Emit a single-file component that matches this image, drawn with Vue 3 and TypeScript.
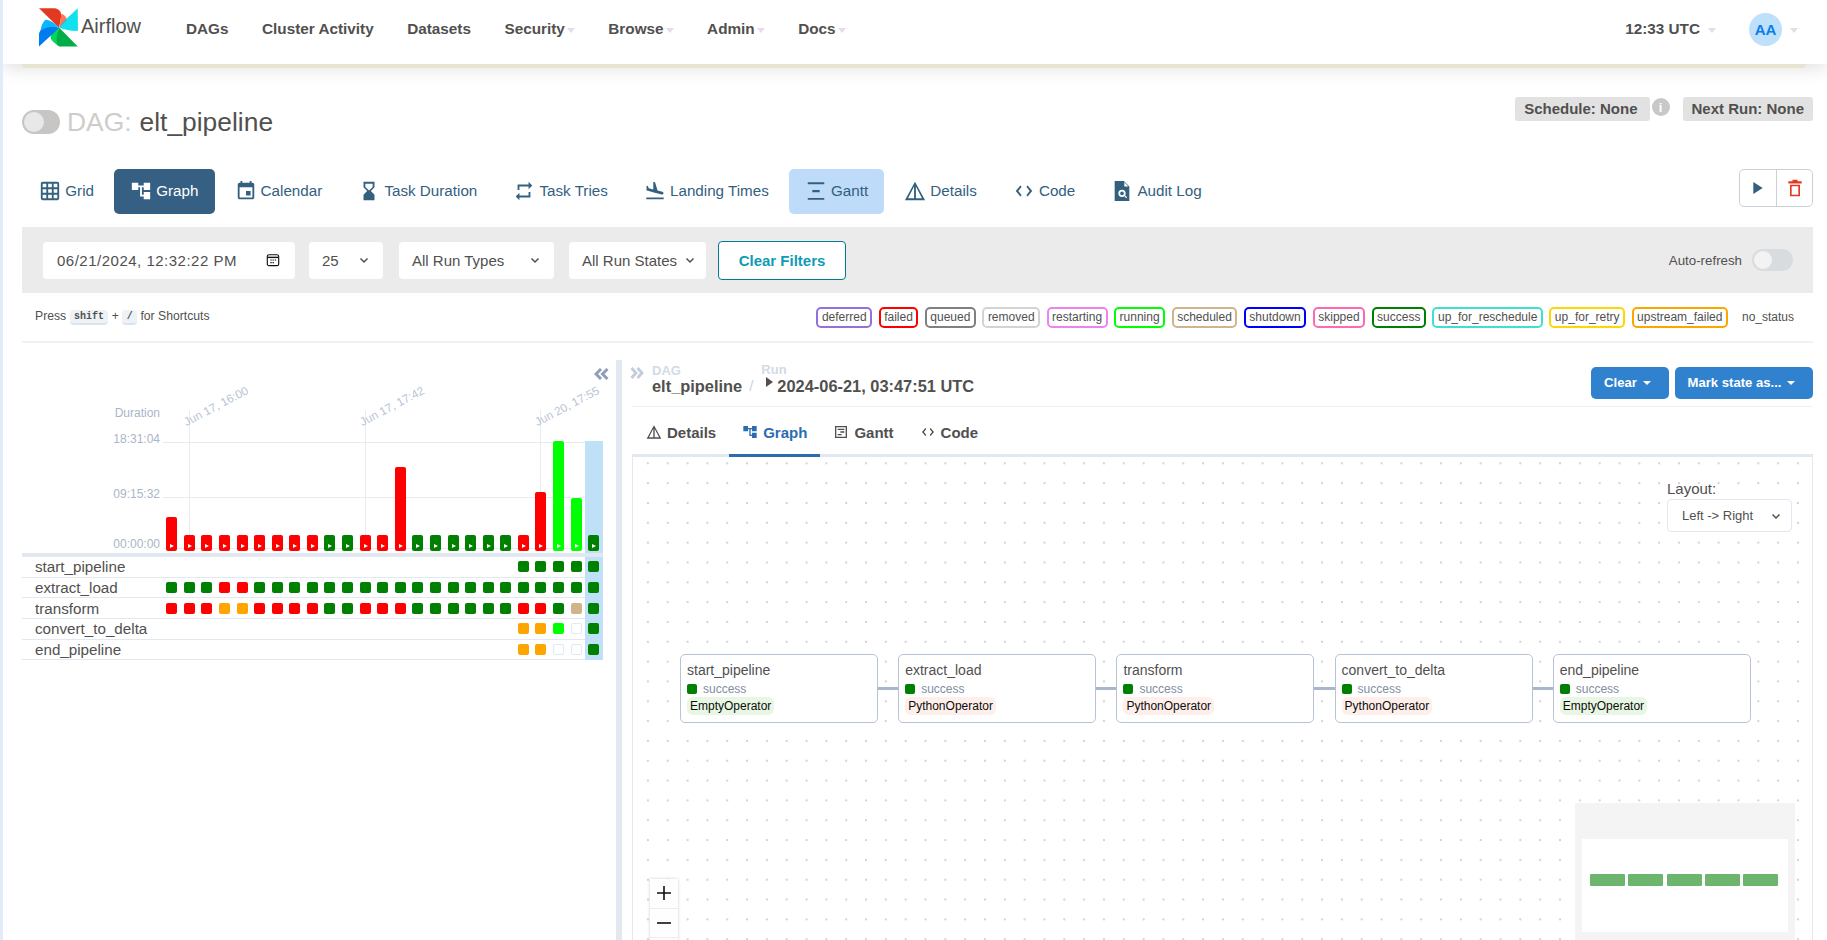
<script setup lang="ts">
interface IconTab { label: string; d: string; active?: boolean; hover?: boolean }

const paths = {
  grid: 'M20 2H4c-1.1 0-2 .9-2 2v16c0 1.1.9 2 2 2h16c1.1 0 2-.9 2-2V4c0-1.1-.9-2-2-2zM8 20H4v-4h4v4zm0-6H4v-4h4v4zm0-6H4V4h4v4zm6 12h-4v-4h4v4zm0-6h-4v-4h4v4zm0-6h-4V4h4v4zm6 12h-4v-4h4v4zm0-6h-4v-4h4v4zm0-6h-4V4h4v4z',
  graph: 'M22 11V3h-7v3H9V3H2v8h7V8h2v10h4v3h7v-8h-7v3h-2V8h2v3h7z',
  cal: 'M17 12h-5v5h5v-5zM16 1v2H8V1H6v2H5c-1.11 0-1.99.9-1.99 2L3 19c0 1.1.89 2 2 2h14c1.1 0 2-.9 2-2V5c0-1.1-.9-2-2-2h-1V1h-2zm3 18H5V8h14v11z',
  hour: 'M18 22l-.01-6L14 12l3.99-4.010L18 2H6v6l4 4-4 3.990V22h12zM8 7.500V4h8v3.500l-4 4-4-4z',
  tries: 'M7 7h10v3l4-4-4-4v3H5v6h2V7zm10 10H7v-3l-4 4 4 4v-3h12v-6h-2v4z',
  land: 'M2.500 19h19v2h-19zm7.180-5.730l4.350 1.160 5.310 1.420c.8.210 1.620-.260 1.840-1.060.210-.8-.260-1.620-1.060-1.840l-5.310-1.420-2.760-9.020L10.120 2v8.280L5.150 8.950l-.930-2.320-1.450-.390v5.170l1.600.430 5.310 1.430z',
  gantt: 'M3 2.500h18v2H3zM8 11h8v2.400H8zM3 19.500h18v2H3z',
  warn: 'M12 2L1 22h22L12 2zm-1 5.200V20H4.400L11 7.200zm2 0L19.600 20H13V7.200z',
  code: 'M9.400 16.600L5.800 12l3.600-4.600L8 6l-5 6 5 6 1.400-1.400zm5.200 0l3.600-4.600-3.600-4.600L16 6l5 6-5 6-1.400-1.400z',
  audit: 'M4 1h10l6 6v16H4zM14.500 2.500V7H19zM12 10.500a4 4 0 1 0 0 8 4 4 0 0 0 0-8zM12 12.500a2 2 0 1 1 0 4 2 2 0 0 1 0-4zM14.500 17.500l2 2.500 1-1-2-2.500z',
  ganttBox: 'M3 3h18v18H3zM5 5v14h14V5zM7 7h10v2H7zM11 11h6v2h-6zM7 15h6v2H7z'
}

const tabs: IconTab[] = [
  { label: 'Grid', d: paths.grid },
  { label: 'Graph', d: paths.graph, active: true },
  { label: 'Calendar', d: paths.cal },
  { label: 'Task Duration', d: paths.hour },
  { label: 'Task Tries', d: paths.tries },
  { label: 'Landing Times', d: paths.land },
  { label: 'Gantt', d: paths.gantt, hover: true },
  { label: 'Details', d: paths.warn },
  { label: 'Code', d: paths.code },
  { label: 'Audit Log', d: paths.audit }
]

const detailTabs: IconTab[] = [
  { label: 'Details', d: paths.warn },
  { label: 'Graph', d: paths.graph, active: true },
  { label: 'Gantt', d: paths.ganttBox },
  { label: 'Code', d: paths.code }
]

const navLinks = [
  { label: 'DAGs', caret: false },
  { label: 'Cluster Activity', caret: false },
  { label: 'Datasets', caret: false },
  { label: 'Security', caret: true },
  { label: 'Browse', caret: true },
  { label: 'Admin', caret: true },
  { label: 'Docs', caret: true }
]

const legend = [
  ['deferred', '#9370db'], ['failed', '#ff0000'], ['queued', '#808080'], ['removed', '#d3d3d3'],
  ['restarting', '#ee82ee'], ['running', '#00ff00'], ['scheduled', '#d2b48c'], ['shutdown', '#0000ff'],
  ['skipped', '#ff69b4'], ['success', '#008000'], ['up_for_reschedule', '#40e0d0'], ['up_for_retry', '#ffd700'],
  ['upstream_failed', '#ffa500']
]

const colors: Record<string, string> = { r: '#ff0000', g: '#008000', l: '#00ff00', o: '#ffa500', t: '#d2b48c' }

const barStates = 'rrrrrrrrrggrrrggggggrrllg'.split('')
const barHeights: Record<number, number> = { 0: 34, 13: 84, 21: 59, 22: 110, 23: 53 }
const bars = barStates.map((s, i) => ({ color: colors[s], height: (barHeights[i] ?? 16) + 'px' }))

const rows = [
  { name: 'start_pipeline', states: '....................ggggg' },
  { name: 'extract_load', states: 'gggrrgggggggggggggggggggg' },
  { name: 'transform', states: 'rrroorrrrggrrrggggggrrgtg' },
  { name: 'convert_to_delta', states: '....................oolng' },
  { name: 'end_pipeline', states: '....................oonng' }
].map((r) => ({ name: r.name, cells: r.states.split('') }))

const nodes = [
  { name: 'start_pipeline', op: 'EmptyOperator', tone: 'empty' },
  { name: 'extract_load', op: 'PythonOperator', tone: 'python' },
  { name: 'transform', op: 'PythonOperator', tone: 'python' },
  { name: 'convert_to_delta', op: 'PythonOperator', tone: 'python' },
  { name: 'end_pipeline', op: 'EmptyOperator', tone: 'empty' }
]

const xLabels = [
  { text: 'Jun 17, 16:00', cls: 'x1' },
  { text: 'Jun 17, 17:42', cls: 'x2' },
  { text: 'Jun 20, 17:55', cls: 'x3' }
]
</script>

<template>
  <div class="page">
    <header class="nav">
      <div class="brand">
        <svg class="logo" viewBox="57 25 117 116" width="39" height="39">
          <path d="M57 25L105 25C120 28 124 38 124 50L117 84Z" fill="#e43921" />
          <path d="M124 42C135 45 142 55 140 66L118 84Z" fill="#ff7557" />
          <path d="M173 25L174 93C160 95 135 90 118 84Z" fill="#11e1ee" />
          <path d="M173 25L118 84C122 70 150 48 173 25Z" fill="#00c7d4" />
          <path d="M173 140L118 140C104 135 102 118 108 105L118 84Z" fill="#00ad46" />
          <path d="M118 84C104 88 92 100 92 114C96 126 104 130 112 134C108 118 110 100 118 84Z" fill="#04d659" />
          <path d="M57 140L57 102C60 88 75 76 92 78L118 84Z" fill="#017cee" />
          <path d="M118 84C104 70 88 58 76 60C68 68 62 82 62 92C80 80 100 78 118 84Z" fill="#0cb6ff" />
        </svg>
        <span class="brand-name">Airflow</span>
      </div>
      <nav class="links">
        <a v-for="l in navLinks" :key="l.label" class="link">
          {{ l.label }}<i v-if="l.caret" class="caret"></i>
        </a>
      </nav>
      <div class="nav-right">
        <span class="link">12:33 UTC<i class="caret wide"></i></span>
        <span class="avatar">AA</span>
        <i class="caret wide"></i>
      </div>
    </header>
    <div class="accent"></div>

    <main class="main">
      <section class="title-row">
        <h1 class="title">
          <span class="toggle"><span class="knob"></span></span>
          <span class="dag-word">DAG:</span>
          <span class="dag-name">elt_pipeline</span>
        </h1>
        <div class="sched">
          <span class="pill schedule">Schedule: None</span>
          <span class="info">i</span>
          <span class="pill next">Next Run: None</span>
        </div>
      </section>

      <section class="tabs">
        <a
          v-for="t in tabs"
          :key="t.label"
          class="tab"
          :class="{ active: t.active, hover: t.hover }"
        >
          <svg viewBox="0 0 24 24" class="tab-ic"><path :d="t.d" fill="currentColor" fill-rule="evenodd" /></svg>
          {{ t.label }}
        </a>
        <div class="actions">
          <button class="act">
            <svg viewBox="0 0 24 24" width="16" height="16"><path d="M5 3l14 9-14 9z" fill="#33607f" /></svg>
          </button>
          <button class="act">
            <svg viewBox="0 0 24 24" width="20" height="20">
              <path d="M9 2h6v2h5v2.500H4V4h5zM6 8h12v14H6zM8 10v10h8V10z" fill="#e43921" fill-rule="evenodd" />
            </svg>
          </button>
        </div>
      </section>

      <section class="filters">
        <div class="field date">
          <span>06/21/2024, 12:32:22 PM</span>
          <svg viewBox="0 0 16 16" width="14" height="14">
            <rect x="1.500" y="2" width="13" height="12.500" rx="2" fill="none" stroke="#111" stroke-width="1.300" />
            <path d="M2 5h12" stroke="#111" stroke-width="1.600" />
            <path d="M5 8h1.500M7.500 8H9M10 8h1.500M5 11h1.500M7.500 11H9" stroke="#111" stroke-width="1.300" />
          </svg>
        </div>
        <div class="field num">
          <span>25</span>
          <svg class="chev" viewBox="0 0 12 12"><path d="M2.500 4.500L6 8l3.500-3.500" fill="none" stroke="#51504f" stroke-width="1.500" /></svg>
        </div>
        <div class="field types">
          <span>All Run Types</span>
          <svg class="chev" viewBox="0 0 12 12"><path d="M2.500 4.500L6 8l3.500-3.500" fill="none" stroke="#51504f" stroke-width="1.500" /></svg>
        </div>
        <div class="field states">
          <span>All Run States</span>
          <svg class="chev" viewBox="0 0 12 12"><path d="M2.500 4.500L6 8l3.500-3.500" fill="none" stroke="#51504f" stroke-width="1.500" /></svg>
        </div>
        <button class="clear-filters">Clear Filters</button>
        <div class="auto">
          <span>Auto-refresh</span>
          <span class="auto-switch"><span class="auto-knob"></span></span>
        </div>
      </section>

      <section class="legend-row">
        <div class="press">
          Press <kbd class="kb">shift</kbd> + <kbd class="kb">/</kbd> for Shortcuts
        </div>
        <div class="legend">
          <span v-for="[name, c] in legend" :key="name" class="lg" :style="{ borderColor: c }">{{ name }}</span>
          <span class="lg none">no_status</span>
        </div>
      </section>

      <section class="panels">
        <div class="left">
          <div class="chart">
            <svg class="collapse" viewBox="0 0 15 12" width="15" height="12">
              <path d="M7 1L2 6l5 5M13.500 1L8.500 6l5 5" fill="none" stroke="#8f9fb8" stroke-width="3" />
            </svg>
            <span class="axis-title">Duration</span>
            <span class="ylab y1">18:31:04</span>
            <span class="ylab y2">09:15:32</span>
            <span class="ylab y3">00:00:00</span>
            <i class="hline h1"></i>
            <i class="hline h2"></i>
            <i class="hline h3"></i>
            <i class="vline v1"></i>
            <i class="vline v2"></i>
            <i class="vline v3"></i>
            <span v-for="x in xLabels" :key="x.text" class="xlab" :class="x.cls">{{ x.text }}</span>
            <div v-for="(b, i) in bars" :key="i" class="bar-col">
              <div class="bar" :style="{ height: b.height, background: b.color }"><i class="play"></i></div>
            </div>
          </div>
          <div class="band"></div>
          <div class="task-rows">
            <div v-for="r in rows" :key="r.name" class="task-row">
              <div class="task-name">{{ r.name }}</div>
              <div v-for="(c, i) in r.cells" :key="i" class="cell">
                <i
                  v-if="c !== '.'"
                  class="sq"
                  :class="{ empty: c === 'n' }"
                  :style="c !== 'n' ? { background: colors[c] } : undefined"
                ></i>
              </div>
            </div>
          </div>
          <div class="highlight"></div>
        </div>

        <div class="divider"></div>

        <div class="right">
          <div class="run-head">
            <svg class="expand" viewBox="0 0 14 12" width="14" height="12">
              <path d="M1.500 1L6 6l-4.500 5M7.500 1L12 6l-4.500 5" fill="none" stroke="#c3ccda" stroke-width="2.800" />
            </svg>
            <div class="crumb">
              <small>DAG</small>
              <b>elt_pipeline</b>
            </div>
            <span class="slash">/</span>
            <div class="crumb run">
              <small>Run</small>
              <b><i class="run-tri"></i>2024-06-21, 03:47:51 UTC</b>
            </div>
            <div class="run-btns">
              <button class="blue clear">Clear<i class="w-caret"></i></button>
              <button class="blue mark">Mark state as...<i class="w-caret"></i></button>
            </div>
          </div>

          <div class="dtabs">
            <a v-for="t in detailTabs" :key="t.label" class="dtab" :class="{ on: t.active }">
              <svg viewBox="0 0 24 24" class="dtab-ic"><path :d="t.d" fill="currentColor" fill-rule="evenodd" /></svg>
              {{ t.label }}
            </a>
          </div>

          <div class="canvas">
            <div class="layout-ctl">
              <label>Layout:</label>
              <div class="layout-sel">
                <span>Left -&gt; Right</span>
                <svg class="chev" viewBox="0 0 12 12"><path d="M2.500 4.500L6 8l3.500-3.500" fill="none" stroke="#51504f" stroke-width="1.500" /></svg>
              </div>
            </div>

            <div class="flow">
              <template v-for="(n, i) in nodes" :key="n.name">
                <i v-if="i > 0" class="edge"></i>
                <div class="node">
                  <div class="node-name">{{ n.name }}</div>
                  <div class="node-state"><i class="node-dot"></i>success</div>
                  <span class="op" :class="n.tone">{{ n.op }}</span>
                </div>
              </template>
            </div>

            <div class="zoom-ctl">
              <button>
                <svg viewBox="0 0 14 14" width="14" height="14"><path d="M7 0v14M0 7h14" stroke="#111" stroke-width="1.600" /></svg>
              </button>
              <button>
                <svg viewBox="0 0 14 14" width="14" height="14"><path d="M0 7h14" stroke="#111" stroke-width="1.600" /></svg>
              </button>
              <button></button>
            </div>

            <div class="minimap">
              <div class="mini-view">
                <i v-for="n in nodes" :key="n.name" class="mini-node"></i>
              </div>
            </div>
          </div>
        </div>
      </section>
    </main>
  </div>
</template>

<style>
html,
body {
  margin: 0;
  height: 940px;
  overflow: hidden;
  background: #e1ecfb;
}
</style>

<style scoped>
* {
  box-sizing: border-box;
}
.page {
  margin-left: 3px;
  height: 940px;
  background: #fff;
  overflow: hidden;
  font-family: "Liberation Sans", Arial, sans-serif;
  color: #51504f;
}
.nav {
  position: relative;
  z-index: 3;
  display: flex;
  align-items: center;
  height: 64px;
  padding: 0 29px 6px 36px;
  background: #fff;
  box-shadow: 0 3px 18px rgba(0, 0, 0, 0.14);
}
.brand {
  display: flex;
  align-items: center;
  gap: 3px;
  width: 147px;
}
.logo {
  display: block;
  margin-top: -3px;
}
.brand-name {
  font-size: 20px;
  margin-top: -5px;
  color: #51504f;
}
.links {
  display: flex;
  gap: 33.5px;
}
.link {
  display: inline-flex;
  align-items: center;
  font-size: 15.3px;
  font-weight: 700;
  color: #51504f;
}
.caret {
  display: inline-block;
  width: 0;
  height: 0;
  margin-left: 2px;
  margin-top: 3px;
  border-left: 4px solid transparent;
  border-right: 4px solid transparent;
  border-top: 5px solid #e6dbea;
}
.caret.wide {
  margin-left: 8px;
}
.nav-right {
  margin-left: auto;
  display: flex;
  align-items: center;
}
.avatar {
  display: flex;
  align-items: center;
  justify-content: center;
  width: 33px;
  height: 33px;
  margin-left: 33px;
  border-radius: 50%;
  background: #bee0fb;
  color: #0b7ce8;
  font-size: 15px;
  font-weight: 700;
}
.accent {
  position: relative;
  z-index: 4;
  height: 4px;
  margin: 0 21px 0 19px;
  background: #e8e4d2;
  border-radius: 0 0 3px 3px;
}
.main {
  padding: 0 14px 0 19px;
}
.title-row {
  display: flex;
  justify-content: space-between;
  align-items: flex-start;
  height: 101px;
  padding-top: 29px;
}
.title {
  display: flex;
  align-items: center;
  margin: 9px 0 0;
  font-size: 26.4px;
  line-height: 32px;
  font-weight: 400;
}
.toggle {
  display: block;
  width: 38px;
  height: 24px;
  padding: 2px;
  margin-right: 7px;
  border-radius: 12px;
  background: #c8c6c4;
}
.knob {
  display: block;
  width: 20px;
  height: 20px;
  border-radius: 50%;
  background: #e8e8e8;
}
.dag-word {
  color: #cfcdcb;
  margin-right: 8px;
}
.sched {
  display: flex;
  align-items: flex-start;
}
.pill {
  display: block;
  height: 24px;
  padding: 0 9px;
  line-height: 23px;
  font-size: 15px;
  font-weight: 700;
  background: #e2e2e2;
  border-radius: 3px;
}
.pill.schedule {
  padding-right: 12px;
}
.info {
  display: flex;
  align-items: center;
  justify-content: center;
  width: 18px;
  height: 18px;
  margin: 1px 13px 0 2px;
  border-radius: 50%;
  background: #c8c8c8;
  color: #fff;
  font-size: 13px;
  font-weight: 700;
}
.tabs {
  display: flex;
  align-items: flex-start;
  height: 45px;
  margin-bottom: 13px;
  padding-left: 1px;
  gap: 3.6px;
}
.tab {
  display: flex;
  align-items: center;
  gap: 4px;
  height: 45px;
  padding: 0 16.3px 2px;
  border-radius: 5px;
  font-size: 15.2px;
  color: #33607f;
}
.tab-ic {
  width: 22px;
  height: 22px;
  flex: none;
}
.tab.active {
  background: #365f84;
  color: #fff;
}
.tab.hover {
  background: #bedcfa;
}
.actions {
  display: flex;
  margin-left: auto;
  height: 38px;
  border: 1px solid #cbd0d6;
  border-radius: 5px;
}
.act {
  display: flex;
  align-items: center;
  justify-content: center;
  width: 36px;
  padding: 0;
  border: 0;
  background: #fff;
  border-radius: 5px;
}
.act + .act {
  border-left: 1px solid #cbd0d6;
  border-radius: 0 5px 5px 0;
}
.filters {
  display: flex;
  align-items: center;
  height: 66px;
  padding: 0 20px 0 21px;
  background: #ebebeb;
}
.field {
  display: flex;
  align-items: center;
  justify-content: space-between;
  height: 37px;
  margin-right: 15px;
  padding: 0 13px;
  background: #fff;
  border-radius: 4px;
  font-size: 15px;
}
.date {
  width: 252px;
  margin-right: 14px;
  padding: 0 15px 0 14px;
  letter-spacing: 0.5px;
}
.num {
  width: 74px;
  margin-right: 16px;
}
.types {
  width: 155px;
}
.states {
  width: 137px;
  padding-right: 10px;
  margin-right: 12px;
}
.chev {
  width: 12px;
  height: 12px;
  flex: none;
}
.clear-filters {
  width: 128px;
  height: 39px;
  padding: 0;
  border: 1px solid #017a94;
  border-radius: 4px;
  background: #fff;
  color: #0f9bb5;
  font: 700 15px "Liberation Sans", Arial, sans-serif;
}
.auto {
  display: flex;
  align-items: center;
  gap: 10px;
  margin-left: auto;
  font-size: 13.3px;
}
.auto-switch {
  display: block;
  width: 41px;
  height: 22px;
  padding: 2px;
  border-radius: 11px;
  background: #d9dcdf;
}
.auto-knob {
  display: block;
  width: 18px;
  height: 18px;
  border-radius: 50%;
  background: #f3f3f3;
}
.legend-row {
  display: flex;
  align-items: center;
  justify-content: space-between;
  height: 50px;
  padding: 0 13.5px 0 13px;
  border-bottom: 2px solid #edf2f7;
}
.press {
  font-size: 12.2px;
}
.kb {
  display: inline-block;
  padding: 0 4.4px;
  background: #edf2f7;
  border-radius: 4px;
  border-bottom: 2px solid #dbe3ec;
  font: 700 10px "Liberation Mono", monospace;
  line-height: 13px;
  vertical-align: 1px;
}
.legend {
  display: flex;
  align-items: center;
  gap: 6.5px;
}
.lg {
  display: block;
  height: 21px;
  padding: 0 3.5px;
  line-height: 17px;
  border: 2px solid #000;
  border-radius: 5px;
  font-size: 12px;
  color: #51504f;
}
.lg.none {
  border-color: transparent;
  margin-left: 2px;
  color: #51504f;
}
.panels {
  display: flex;
  height: 597px;
}
.left {
  position: relative;
  width: 581px;
  flex: none;
}
.chart {
  position: relative;
  display: flex;
  align-items: flex-end;
  height: 210px;
  padding: 0 0 2px 141px;
}
.collapse {
  position: absolute;
  right: -6px;
  top: 25px;
}
.axis-title,
.ylab {
  position: absolute;
  left: 0;
  width: 138px;
  text-align: right;
  font-size: 12px;
  line-height: 14px;
  color: #a9b6c9;
}
.axis-title {
  top: 63px;
}
.y1 {
  top: 89px;
}
.y2 {
  top: 144px;
}
.y3 {
  top: 194px;
}
.hline {
  position: absolute;
  left: 141px;
  right: 0;
  height: 1px;
  background: #e8ecf2;
}
.h1 {
  top: 99px;
}
.h2 {
  top: 154px;
}
.h3 {
  top: 205px;
}
.vline {
  position: absolute;
  top: 67px;
  bottom: 5px;
  width: 1px;
  background: #e8ecf2;
}
.v1 {
  left: 167px;
}
.v2 {
  left: 343px;
}
.v3 {
  left: 518px;
}
.xlab {
  position: absolute;
  top: 72px;
  font-size: 11.7px;
  line-height: 14px;
  color: #b9c4d4;
  white-space: nowrap;
  transform: rotate(-28deg);
  transform-origin: left bottom;
}
.x1 {
  left: 166px;
}
.x2 {
  left: 342px;
}
.x3 {
  left: 517px;
}
.bar-col {
  position: relative;
  z-index: 2;
  display: flex;
  justify-content: center;
  width: 17.58px;
  flex: none;
}
.bar {
  position: relative;
  width: 11px;
  border-radius: 2px;
}
.play {
  position: absolute;
  left: 4px;
  bottom: 3.500px;
  width: 0;
  height: 0;
  border-left: 4px solid #fff;
  border-top: 2.500px solid transparent;
  border-bottom: 2.500px solid transparent;
}
.band {
  position: relative;
  z-index: 2;
  height: 4px;
  background: #e2e8f0;
}
.task-row {
  display: flex;
  align-items: center;
  height: 20.7px;
  border-bottom: 1px solid #e2e8f0;
}
.task-name {
  width: 141px;
  flex: none;
  padding-left: 13px;
  font-size: 15.2px;
}
.cell {
  position: relative;
  z-index: 2;
  display: flex;
  justify-content: center;
  width: 17.58px;
  flex: none;
}
.sq {
  display: block;
  width: 11px;
  height: 11px;
  border-radius: 2px;
}
.sq.empty {
  background: #fff;
  border: 1px solid #e2e8f0;
}
.highlight {
  position: absolute;
  z-index: 1;
  left: 563px;
  width: 18px;
  top: 98px;
  height: 219px;
  background: #bfe1f7;
}
.divider {
  width: 6px;
  height: 597px;
  margin: 17px 0 0 13px;
  background: #e2e8f0;
  flex: none;
}
.right {
  flex: 1;
  min-width: 0;
  padding-left: 10px;
  height: 597px;
  display: flex;
  flex-direction: column;
}
.run-head {
  display: flex;
  align-items: flex-start;
  height: 64px;
  padding-top: 21px;
  border-bottom: 1px solid #edf2f7;
}
.expand {
  flex: none;
  width: 14px;
  margin: 3px 8px 0 -2px;
}
.crumb {
  display: flex;
  flex-direction: column;
}
.crumb small {
  font-size: 13px;
  line-height: 13px;
  font-weight: 700;
  color: #d3dae5;
}
.crumb b {
  font-size: 16.4px;
  line-height: 19px;
  color: #51504f;
}
.crumb.run {
  margin-top: -1px;
}
.crumb.run b {
  line-height: 20px;
}
.slash {
  margin: 13px 8px 0 7px;
  color: #cbd5e0;
  font-size: 15px;
}
.run-tri {
  display: inline-block;
  width: 0;
  height: 0;
  margin: 0 4px 5px 5px;
  border-left: 7px solid #51504f;
  border-top: 5px solid transparent;
  border-bottom: 5px solid transparent;
}
.run-btns {
  display: flex;
  gap: 6px;
  margin-left: auto;
  margin-top: 3px;
}
.blue {
  height: 32px;
  border: 0;
  padding: 0 5px 1px 0;
  background: #3182ce;
  color: #fff;
  border-radius: 5px;
  font: 700 13.1px "Liberation Sans", Arial, sans-serif;
}
.clear {
  width: 78px;
}
.mark {
  width: 138px;
}
.w-caret {
  display: inline-block;
  width: 0;
  height: 0;
  margin-left: 6px;
  vertical-align: 2px;
  border-left: 4px solid transparent;
  border-right: 4px solid transparent;
  border-top: 4px solid #fff;
}
.dtabs {
  display: flex;
  height: 50px;
  border-bottom: 3px solid #e2e8f0;
}
.dtab {
  display: flex;
  align-items: center;
  gap: 5px;
  height: 50px;
  padding: 0 13px;
  font-size: 15px;
  font-weight: 700;
  color: #51504f;
}
.dtab:first-child {
  padding-left: 14px;
}
.dtab-ic {
  width: 16px;
  height: 16px;
  flex: none;
}
.dtab.on {
  color: #2b6cb0;
  border-bottom: 3px solid #2b6cb0;
  padding-top: 3px;
}
.canvas {
  position: relative;
  flex: 1;
  min-height: 0;
  overflow: hidden;
  border-left: 1px solid #e2e8f0;
  border-right: 1px solid #e2e8f0;
  background-image: radial-gradient(circle at center, #a8a8b0 0.55px, transparent 0.85px);
  background-size: 19.84px 19.84px;
  background-position: 5px -3.6px;
}
.layout-ctl {
  position: absolute;
  top: 23px;
  right: 20px;
  width: 125px;
  font-size: 15px;
}
.layout-ctl label {
  display: block;
  line-height: 18px;
  margin-bottom: 1px;
}
.layout-sel {
  display: flex;
  align-items: center;
  justify-content: space-between;
  height: 33px;
  padding: 0 9px 0 14px;
  background: #fff;
  border: 1px solid #e2e8f0;
  border-radius: 4px;
  font-size: 13px;
}
.flow {
  display: flex;
  align-items: center;
  padding: 197px 0 0 47px;
}
.node {
  width: 198px;
  height: 69px;
  padding: 6px 6px;
  flex: none;
  background: #fff;
  border: 1.5px solid #b7c4d5;
  border-radius: 5px;
}
.node-name {
  font-size: 14px;
  line-height: 18px;
}
.node-state {
  display: flex;
  align-items: center;
  gap: 6px;
  margin-top: 3px;
  font-size: 12px;
  line-height: 14px;
  color: #7f8ea3;
}
.node-dot {
  width: 10px;
  height: 10px;
  border-radius: 2px;
  background: #008000;
}
.op {
  display: inline-block;
  margin-top: 1px;
  padding: 0 3px;
  border-radius: 6px;
  font-size: 12px;
  line-height: 18px;
  color: #0d0d0d;
}
.op.empty {
  background: #e8f7e4;
}
.op.python {
  background: #ffefeb;
}
.edge {
  width: 20.2px;
  height: 2.5px;
  background: #a8b6c9;
  flex: none;
}
.zoom-ctl {
  position: absolute;
  left: 17px;
  top: 422px;
  width: 28px;
  background: #fefefe;
  box-shadow: 0 0 3px rgba(0, 0, 0, 0.2);
}
.zoom-ctl button {
  display: flex;
  align-items: center;
  justify-content: center;
  width: 28px;
  height: 29.500px;
  padding: 0;
  background: #fefefe;
  border: 0;
  border-bottom: 1px solid #eee;
}
.minimap {
  position: absolute;
  left: 942px;
  top: 346px;
  width: 220px;
  height: 150px;
  padding: 36px 7px 0;
  background: #f4f4f4;
}
.mini-view {
  display: flex;
  align-items: center;
  gap: 3.3px;
  height: 93px;
  padding: 0 10px 12px 8px;
  background: #fff;
}
.mini-node {
  width: 35px;
  height: 12px;
  border-radius: 1px;
  background: #6db56d;
}
</style>
